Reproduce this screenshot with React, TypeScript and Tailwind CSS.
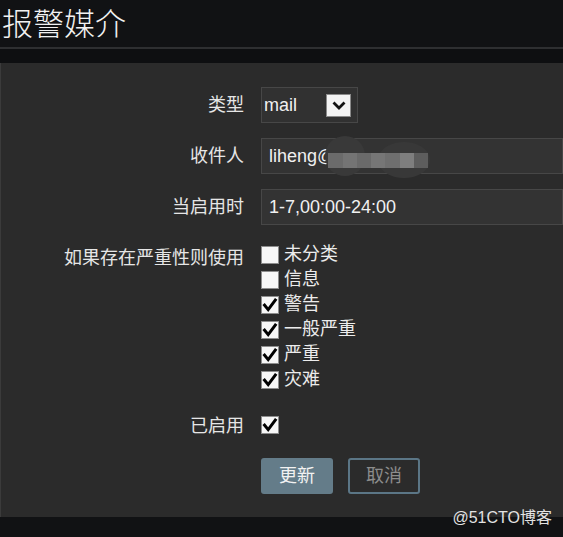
import React from "react";

const Check = ({ checked }: { checked: boolean }) => (
  <span className="flex w-[18px] h-[18px] items-center justify-center bg-[#f7f7f7] border border-[#8d8d8d] shrink-0">
    {checked && (
      <svg width="18" height="18" viewBox="0 0 18 18" className="shrink-0">
        <path d="M2.6 8 L7.2 13.6 L15.2 2.8" fill="none" stroke="#000" strokeWidth="3" strokeLinejoin="miter" />
      </svg>
    )}
  </span>
);

const severities = [
  { name: "未分类", on: false },
  { name: "信息", on: false },
  { name: "警告", on: true },
  { name: "一般严重", on: true },
  { name: "严重", on: true },
  { name: "灾难", on: true },
];

const Label = ({ text, extra = "" }: { text: string; extra?: string }) => (
  <div className={"w-[243px] shrink-0 text-right text-[18px] text-[#e6e6e6] " + extra}>{text}</div>
);

const App = () => {
  return (
    <div className="relative w-[563px] h-[537px] overflow-hidden bg-[#111214] font-['Liberation_Sans','Noto_Sans_CJK_SC',sans-serif]">
      <div className="h-[47px] pl-[2px] pt-[1px]">
        <h1 className="text-[31px] leading-[42px] font-light text-[#f2f2f2] font-['Noto_Sans_CJK_SC',sans-serif]">报警媒介</h1>
      </div>
      <div className="h-[2px] bg-[#2e2f31]" />
      <div className="h-[14px] bg-[#0e0f11]" />

      <div className="h-[454px] bg-[#2b2b2b] border-l border-[#3b3b3b] pt-[24px]">
        {/* type */}
        <div className="flex items-center h-[36px]">
          <Label text="类型" />
          <div className="ml-[17px] w-[97px] h-[36px] bg-[#313131] border border-[#474747] flex items-center pl-[2px] pr-[6px]">
            <span className="text-[18px] text-[#f0f0f0] flex-1">mail</span>
            <span className="w-[25px] h-[23px] bg-[#f3f3f3] border border-[#8a8a8a] flex items-center justify-center">
              <svg width="14" height="9" viewBox="0 0 14 9">
                <path d="M1.5 1.5 L7 7 L12.5 1.5" fill="none" stroke="#111" strokeWidth="2.8" />
              </svg>
            </span>
          </div>
        </div>

        {/* recipient */}
        <div className="flex items-center h-[36px] mt-[15px]">
          <Label text="收件人" />
          <div className="relative ml-[17px] flex-1 h-[36px] bg-[#333333] border border-[#474747] flex items-center pl-[7px]">
            <span className="text-[18px] text-[#f0f0f0]">liheng@</span>
            <svg className="absolute left-[62px] top-[-3px]" width="112" height="44" viewBox="0 0 112 44">
              <ellipse cx="21" cy="20" rx="20" ry="20" fill="#393939" />
              <ellipse cx="80" cy="24" rx="26" ry="18" fill="#383838" />
              <rect x="4" y="17" width="15" height="15" fill="#6b6b6b" />
              <rect x="19" y="17" width="14" height="15" fill="#747474" />
              <rect x="33" y="17" width="14" height="15" fill="#6a6a6a" />
              <rect x="47" y="17" width="14" height="15" fill="#767676" />
              <rect x="61" y="17" width="15" height="15" fill="#6f6f6f" />
              <rect x="76" y="17" width="14" height="15" fill="#7e7e7e" />
              <rect x="90" y="17" width="14" height="15" fill="#5d5d5d" />
            </svg>
          </div>
        </div>

        {/* when active */}
        <div className="flex items-center h-[36px] mt-[15px]">
          <Label text="当启用时" />
          <div className="ml-[17px] flex-1 h-[36px] bg-[#333333] border border-[#474747] flex items-center pl-[7px]">
            <span className="text-[18px] text-[#f0f0f0]">1-7,00:00-24:00</span>
          </div>
        </div>

        {/* severity */}
        <div className="flex mt-[17px]">
          <Label text="如果存在严重性则使用" extra="leading-[25px] pt-[4px]" />
          <div className="ml-[17px] flex flex-col">
            {severities.map((s) => (
              <div key={s.name} className="h-[25px] flex items-center gap-[5px]">
                <Check checked={s.on} />
                <span className="text-[18px] text-[#ececec] leading-[25px]">{s.name}</span>
              </div>
            ))}
          </div>
        </div>

        {/* enabled */}
        <div className="flex items-center h-[25px] mt-[20px]">
          <Label text="已启用" extra="pt-[3px]" />
          <div className="ml-[17px]">
            <Check checked />
          </div>
        </div>

        {/* buttons */}
        <div className="flex mt-[21px] pl-[260px] gap-[15px]">
          <button className="w-[72px] h-[36px] rounded-[3px] bg-[#647c89] text-[18px] text-[#f2f2f2]">更新</button>
          <button className="w-[72px] h-[36px] rounded-[3px] border-2 border-[#5b7686] text-[18px] text-[#8c8c8c]">取消</button>
        </div>
      </div>

      <div className="absolute right-[11px] top-[506px] text-[16px] text-[#e2e2e2]">@51CTO博客</div>
    </div>
  );
};

export default App;
